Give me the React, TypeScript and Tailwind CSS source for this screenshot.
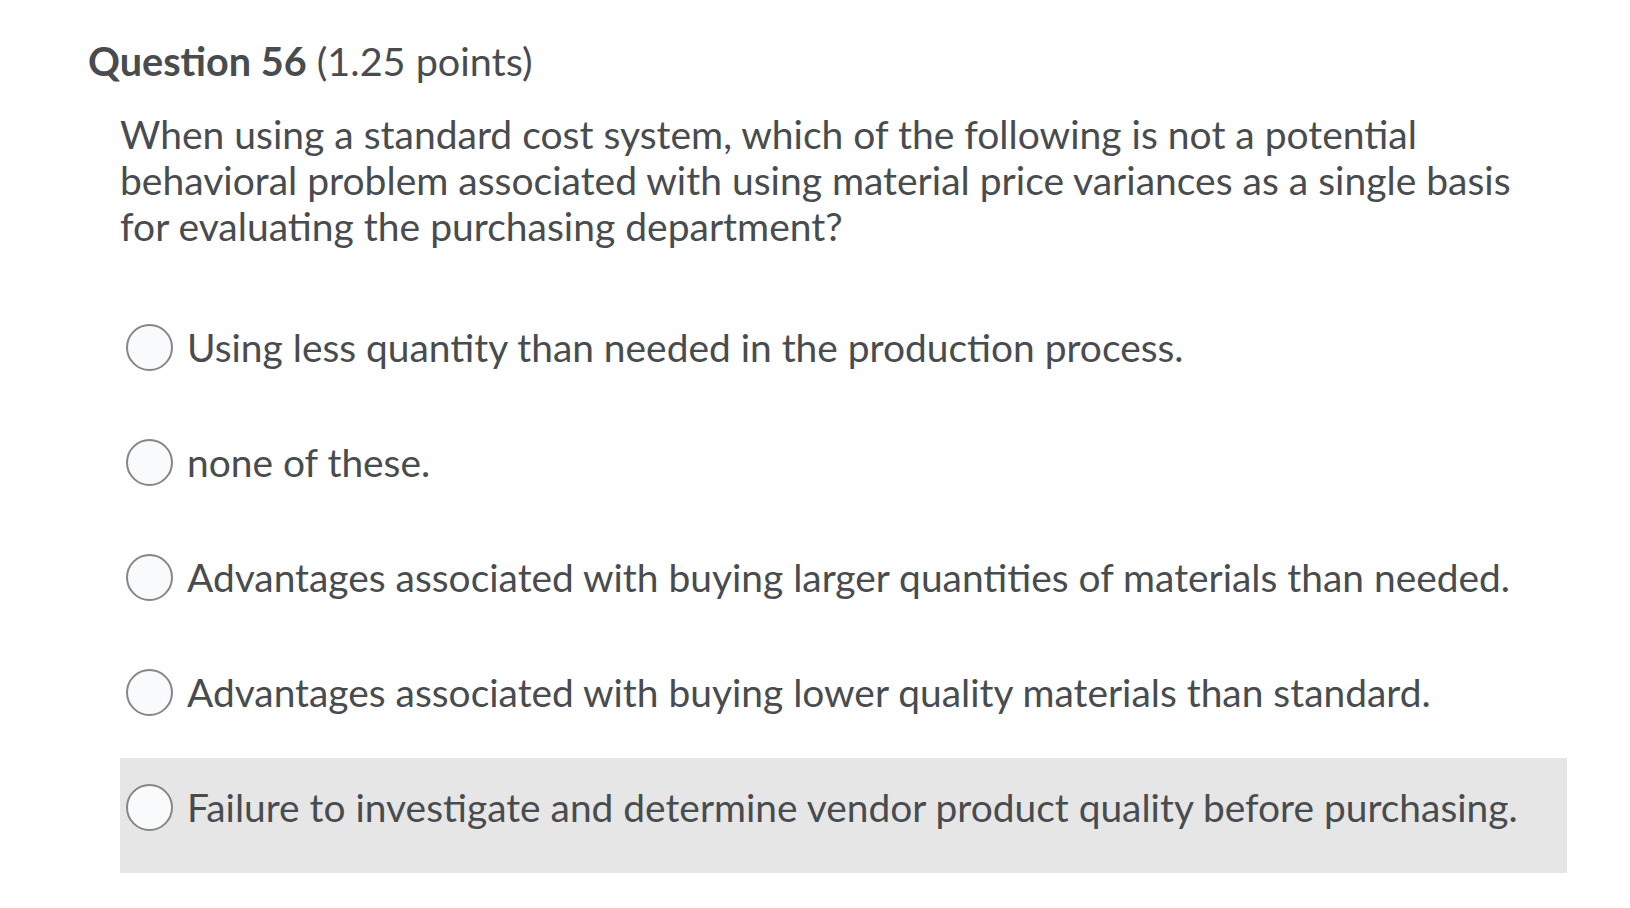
const options = [
  'Using less quantity than needed in the production process.',
  'none of these.',
  'Advantages associated with buying larger quantities of materials than needed.',
  'Advantages associated with buying lower quality materials than standard.',
  'Failure to investigate and determine vendor product quality before purchasing.',
];

export default function App() {
  const hovered = 4;

  return (
    <div
      className="min-h-screen bg-white text-[#494c4e] pl-[88px] pr-[63px] pt-[37px]"
      style={{ fontFamily: 'Lato, "Open Sans", sans-serif' }}
    >
      <h2 className="text-[39.6px] leading-[48px] whitespace-nowrap">
        <span className="font-bold">Question 56</span> (1.25 points)
      </h2>

      <div className="pl-[32px] mt-[26px]">
        <p className="text-[39px] leading-[46px] whitespace-nowrap">
          When using a standard cost system, which of the following is not a potential
          <br />
          behavioral problem associated with using material price variances as a single basis
          <br />
          for evaluating the purchasing department?
        </p>

        <div className="mt-[49px] flex flex-col">
          {options.map((text, i) => (
            <label
              key={i}
              className={
                'h-[115px] flex items-start gap-[14px] pl-[6px] pt-[26px] ' +
                (i === hovered ? 'bg-[#e6e6e6]' : '')
              }
            >
              <span className="w-[47px] h-[47px] shrink-0 rounded-full border-2 border-[#868686] bg-[#f9fafc]" />
              <span className="text-[38.9px] leading-[47px] whitespace-nowrap">{text}</span>
            </label>
          ))}
        </div>
      </div>
    </div>
  );
}
